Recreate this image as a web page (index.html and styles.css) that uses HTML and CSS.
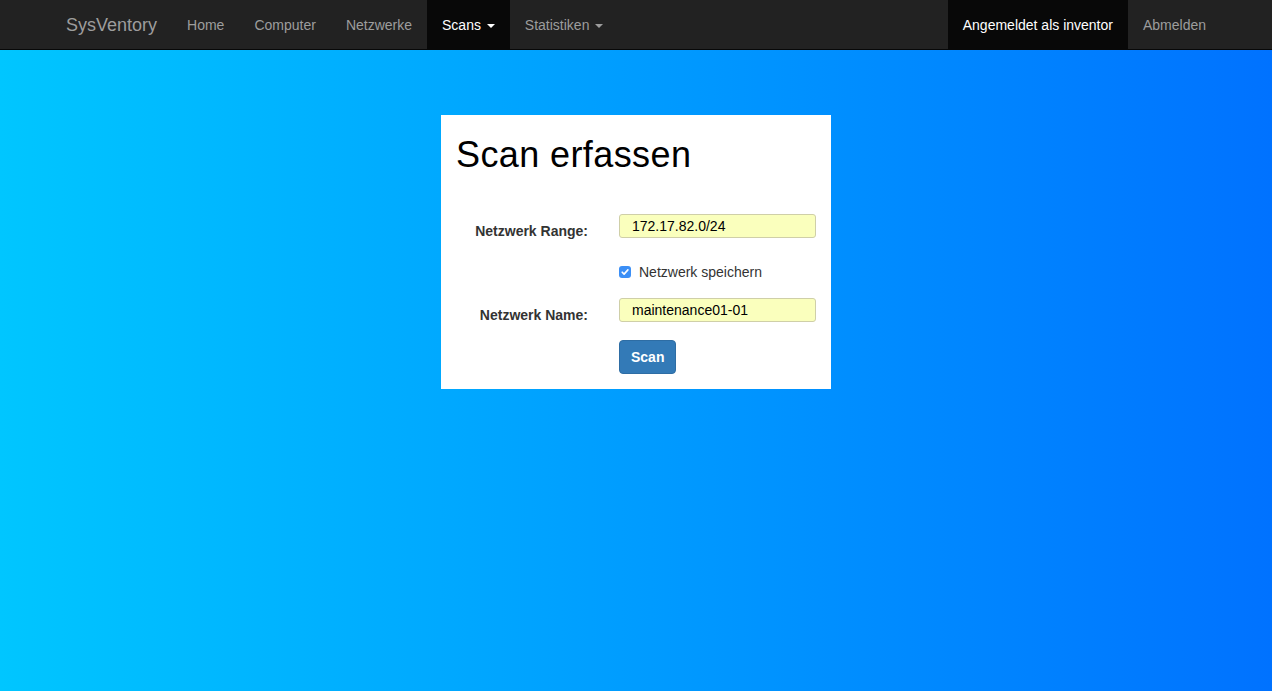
FILE: index.html
```html
<!DOCTYPE html>
<html lang="de">
<head>
<meta charset="utf-8">
<title>SysVentory - Scan erfassen</title>
<link rel="stylesheet" href="styles.css">
</head>
<body>
<nav class="navbar">
  <div class="container">
    <a class="brand" href="#">SysVentory</a>
    <ul class="nav">
      <li><a href="#">Home</a></li>
      <li><a href="#">Computer</a></li>
      <li><a href="#">Netzwerke</a></li>
      <li class="active"><a href="#">Scans <span class="caret"></span></a></li>
      <li><a href="#">Statistiken <span class="caret"></span></a></li>
    </ul>
    <ul class="nav nav-right">
      <li class="active"><a href="#">Angemeldet als inventor</a></li>
      <li><a href="#">Abmelden</a></li>
    </ul>
  </div>
</nav>
<main class="main">
  <section class="card">
    <h1 class="title">Scan erfassen</h1>
    <form class="form">
      <div class="row row-range">
        <label class="control-label">Netzwerk Range:</label>
        <div class="field">172.17.82.0/24</div>
      </div>
      <div class="row row-check">
        <span></span>
        <label class="check">
          <span class="checkbox"><svg width="12" height="12" viewBox="0 0 12 12"><path d="M3.2 6.2 L5.1 8.1 L8.9 3.9" fill="none" stroke="#fff" stroke-width="1.6" stroke-linecap="round" stroke-linejoin="round"/></svg></span>
          Netzwerk speichern
        </label>
      </div>
      <div class="row row-name">
        <label class="control-label">Netzwerk Name:</label>
        <div class="field">maintenance01-01</div>
      </div>
      <div class="row">
        <span></span>
        <div><button type="button" class="btn">Scan</button></div>
      </div>
    </form>
  </section>
</main>
</body>
</html>
```
FILE: styles.css
```css
* { box-sizing: border-box; }
html, body { margin: 0; height: 100%; }
body {
  font-family: "Liberation Sans", Arial, Helvetica, sans-serif;
  font-size: 14px;
  line-height: 20px;
  color: #333;
  background: linear-gradient(to right, #00c6ff, #0072ff);
  min-height: 691px;
}
a { text-decoration: none; }

.navbar {
  height: 50px;
  background: #222;
  border-bottom: 1px solid #080808;
}
.container {
  width: 1170px;
  margin: 0 auto;
  display: flex;
  height: 49px;
}
.brand {
  padding: 15px;
  font-size: 18px;
  line-height: 20px;
  color: #9d9d9d;
}
.nav {
  list-style: none;
  margin: 0;
  padding: 0;
  display: flex;
}
.nav li a {
  display: block;
  padding: 15px 15px 14px;
  line-height: 20px;
  height: 49px;
  color: #9d9d9d;
}
.nav li.active a {
  background: #080808;
  color: #fff;
}
.nav-right { margin-left: auto; }
.caret {
  display: inline-block;
  width: 0;
  height: 0;
  margin-left: 2px;
  vertical-align: middle;
  border-top: 4px solid;
  border-left: 4px solid transparent;
  border-right: 4px solid transparent;
}

.main {
  display: flex;
  justify-content: center;
  padding-top: 65px;
}
.card {
  width: 390px;
  background: #fff;
  padding: 20px 15px 15px;
}
.title {
  margin: 0;
  font-size: 36px;
  line-height: 40px;
  font-weight: 500;
  letter-spacing: 0.4px;
  color: #000;
}
.form { margin-top: 39px; }
.row {
  display: grid;
  grid-template-columns: 132px 197px;
  column-gap: 31px;
  align-items: start;
}
.row-range { margin-bottom: 21px; height: 27px; }
.row-check { margin-bottom: 16px; }
.row-name { margin-bottom: 15px; height: 27px; }
.control-label {
  text-align: right;
  font-weight: bold;
  padding-top: 7px;
}
.field {
  height: 24px;
  line-height: 22px;
  border: 1px solid #cfcfa8;
  border-radius: 3px;
  background: #faffbd;
  color: #000;
  padding: 0 12px;
}
.check {
  display: flex;
  align-items: center;
  gap: 8px;
}
.checkbox {
  display: flex;
  width: 12px;
  height: 12px;
  border-radius: 3px;
  background: #3b8ff6;
}
.btn {
  font-family: inherit;
  font-size: 14px;
  line-height: 20px;
  font-weight: bold;
  color: #fff;
  background: #337ab7;
  border: 1px solid #2e6da4;
  border-radius: 4px;
  padding: 6px 11px;
  height: 34px;
}
```
